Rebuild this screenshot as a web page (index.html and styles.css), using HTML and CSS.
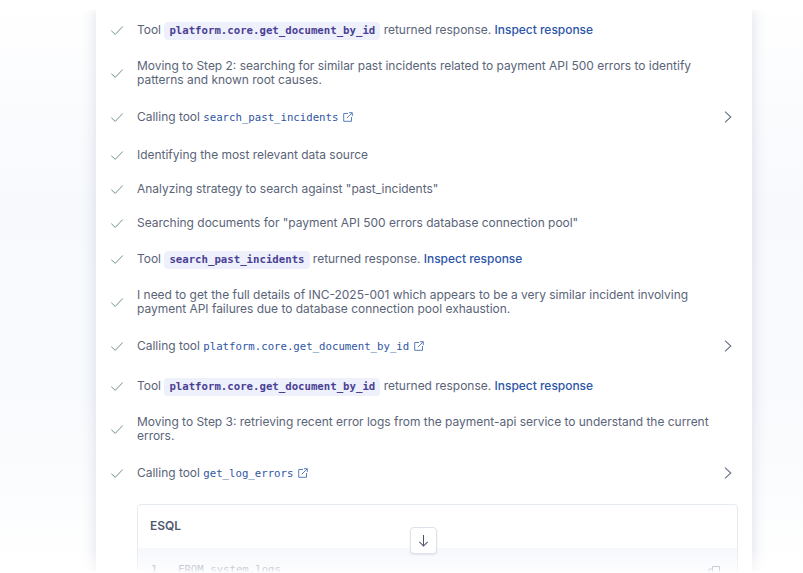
FILE: index.html
```html
<!DOCTYPE html>
<html lang="en">
<head>
<meta charset="utf-8">
<title>Agent reasoning steps</title>
<link rel="stylesheet" href="styles.css">
</head>
<body>
<svg class="defs" width="0" height="0" aria-hidden="true">
  <symbol id="check" viewBox="0 0 16 16"><path d="M1.500 8.800 6 13 14.500 4" fill="none" stroke="currentColor" stroke-width="1.100"/></symbol>
  <symbol id="ext" viewBox="0 0 10 10"><path d="M5 1.500H.7v7.800h7.800V5M3.900 6.100 9.100.9M5.900.7h3.400v3.400" fill="none" stroke="currentColor" stroke-width="1"/></symbol>
  <symbol id="chev" viewBox="0 0 8 12"><path d="M1 .7 6.800 6 1 11.300" fill="none" stroke="currentColor" stroke-width="1.100"/></symbol>
</svg>
<main class="panel">
  <ol class="steps">
    <li class="step step-tool"><svg class="check"><use href="#check"/></svg><p>Tool <code class="badge">platform.core.get_document_by_id</code> returned response. <a class="inspect">Inspect response</a></p></li>
    <li class="step step-long"><svg class="check"><use href="#check"/></svg><p>Moving to Step 2: searching for similar past incidents related to payment API 500 errors to identify patterns and known root causes.</p></li>
    <li class="step step-call"><svg class="check"><use href="#check"/></svg><p>Calling tool <a class="tool-link">search_past_incidents</a><svg class="ext"><use href="#ext"/></svg></p><svg class="chev"><use href="#chev"/></svg></li>
    <li class="step"><svg class="check"><use href="#check"/></svg><p>Identifying the most relevant data source</p></li>
    <li class="step"><svg class="check"><use href="#check"/></svg><p>Analyzing strategy to search against "past_incidents"</p></li>
    <li class="step"><svg class="check"><use href="#check"/></svg><p>Searching documents for "payment API 500 errors database connection pool"</p></li>
    <li class="step step-tool"><svg class="check"><use href="#check"/></svg><p>Tool <code class="badge">search_past_incidents</code> returned response. <a class="inspect">Inspect response</a></p></li>
    <li class="step step-long"><svg class="check"><use href="#check"/></svg><p>I need to get the full details of INC-2025-001 which appears to be a very similar incident involving payment API failures due to database connection pool exhaustion.</p></li>
    <li class="step step-call"><svg class="check"><use href="#check"/></svg><p>Calling tool <a class="tool-link">platform.core.get_document_by_id</a><svg class="ext"><use href="#ext"/></svg></p><svg class="chev"><use href="#chev"/></svg></li>
    <li class="step step-tool"><svg class="check"><use href="#check"/></svg><p>Tool <code class="badge">platform.core.get_document_by_id</code> returned response. <a class="inspect">Inspect response</a></p></li>
    <li class="step step-long"><svg class="check"><use href="#check"/></svg><p>Moving to Step 3: retrieving recent error logs from the payment-api service to understand the current errors.</p></li>
    <li class="step step-call"><svg class="check"><use href="#check"/></svg><p>Calling tool <a class="tool-link">get_log_errors</a><svg class="ext"><use href="#ext"/></svg></p><svg class="chev"><use href="#chev"/></svg></li>
  </ol>
  <section class="card">
    <h2 class="card-title">ESQL</h2>
    <div class="code">
      <span class="line-no">1</span>
      <code class="code-text">FROM system.logs</code>
      <svg class="copy" viewBox="0 0 14 14"><path d="M5.500 1.500h7v9h-7zM5.500 4H2v9h7v-2.500" fill="none" stroke="currentColor"/></svg>
    </div>
  </section>
</main>
<div class="fade"></div>
<button class="scroll-down" aria-label="Scroll to bottom"><svg viewBox="0 0 12 14"><path d="M6 1v12M1.500 8.500 6 13l4.500-4.500" fill="none" stroke="currentColor" stroke-width="1.100"/></svg></button>
</body>
</html>
```
FILE: styles.css
```css
html, body { margin: 0; height: 100%; }
body {
  position: relative;
  height: 573px;
  overflow: hidden;
  padding-top: 10px;
  box-sizing: border-box;
  background: linear-gradient(180deg, #ffffff 0, #f7f9fd 200px, #f8fafd 400px, #ffffff 573px);
  font-family: Inter, "Liberation Sans", sans-serif;
  font-size: 11.960px;
  line-height: 14px;
  color: #5a6478;
}
.defs { position: absolute; }
.panel {
  width: 656px;
  margin-left: 96px;
  height: 600px;
  background: #fff;
  box-shadow: 0 0 14px rgba(60, 80, 120, .18);
  clip-path: inset(0 -24px 0 -24px);
  padding: 8px 14px 0 14px;
  box-sizing: border-box;
}
.steps { list-style: none; margin: 0; padding: 0; display: flex; flex-direction: column; gap: 14px; }
.step { display: flex; align-items: center; height: 20px; }
.step-tool { height: 24px; }
.step-call { height: 28px; }
.step-long { height: 33px; padding-right: 8px; }
.step p { margin: 0; flex: 1; width: 0; }
.step-tool p, .step-call p { padding-top: 1px; }
.check { width: 14px; height: 14px; margin-right: 13px; color: #6c8c80; flex: none; }
.badge {
  display: inline-block;
  padding: 3px 5px;
  border-radius: 4px;
  background: #eef1fb;
  color: #4a3f95;
  font-family: "DejaVu Sans Mono", monospace;
  font-size: 10.700px;
  font-weight: 700;
  line-height: 12px;
}
.inspect { color: #2d55a8; font-weight: 500; }
.tool-link {
  color: #2f55a4;
  font-family: "DejaVu Sans Mono", monospace;
  font-size: 10.700px;
}
.ext { width: 10px; height: 10px; margin-left: 5px; color: #5c7fbf; vertical-align: -1px; }
.chev { width: 8px; height: 12px; margin-right: 6px; color: #667085; flex: none; }
.card {
  margin: 17px 0 0 27px;
  width: 601px;
  height: 90px;
  border: 1px solid #e6eaf1;
  border-radius: 4px;
  box-sizing: border-box;
}
.card-title { margin: 0; padding: 14px 12px; height: 43px; box-sizing: border-box; font-size: 12px; line-height: 14px; font-weight: 600; color: #4f5a70; }
.code { display: flex; align-items: flex-start; gap: 22px; padding: 15px 13px; height: 47px; box-sizing: border-box; background: #f6f8fc; color: #7c8aa5; font-family: "DejaVu Sans Mono", monospace; font-size: 10.700px; line-height: 14px; }
.line-no { width: 5px; }
.code-text { flex: 1; font-family: inherit; }
.copy { width: 14px; height: 14px; margin: 2px 3px 0 0; }
.fade {
  position: absolute;
  left: 0; right: 0; bottom: 0;
  height: 24px;
  background: linear-gradient(180deg, rgba(255,255,255,0), rgba(255,255,255,.65) 85%, #fff);
}
.scroll-down {
  position: absolute;
  left: 410px; top: 527px;
  width: 27px; height: 27px;
  padding: 6px 7px;
  background: #fff;
  border: 1px solid #dde2ec;
  border-radius: 4px;
  box-shadow: 0 1px 2px rgba(60, 80, 120, .12);
  color: #4a5568;
  box-sizing: border-box;
}
.scroll-down svg { display: block; width: 11px; height: 13px; }
```
